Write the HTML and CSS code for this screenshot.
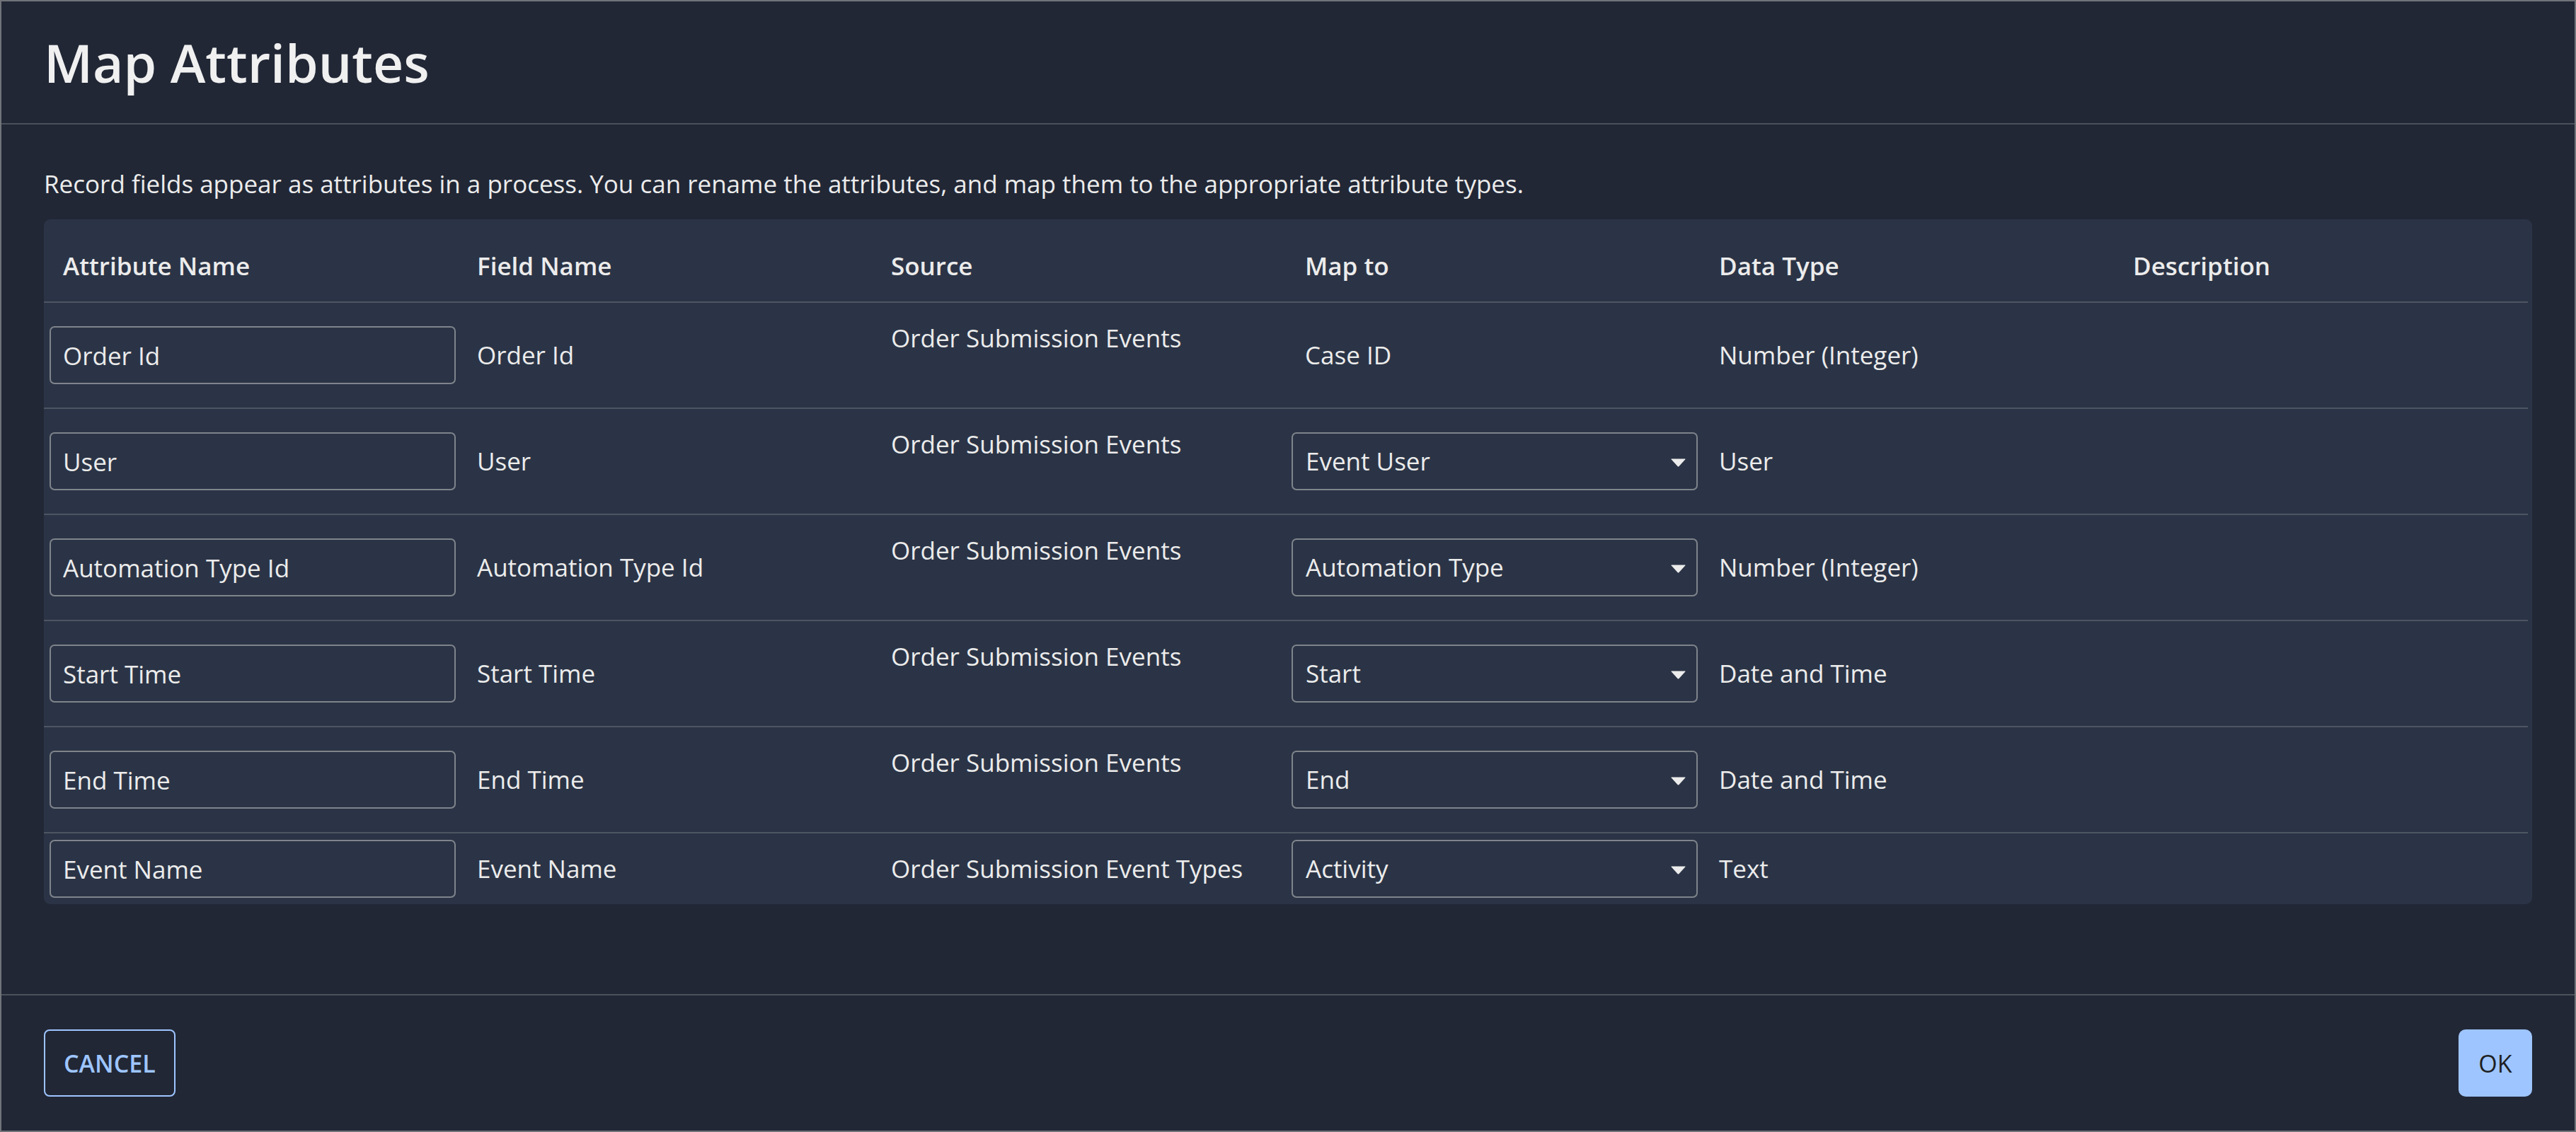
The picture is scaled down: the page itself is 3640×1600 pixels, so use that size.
FILE: index.html
```html
<!DOCTYPE html>
<html lang="en">
<head>
<meta charset="utf-8">
<title>Map Attributes</title>
<link rel="stylesheet" href="styles.css">
</head>
<body>
<div class="dialog">
  <header class="dlg-head">
    <h1 class="title">Map Attributes</h1>
  </header>
  <main class="dlg-body">
    <p class="intro">Record fields appear as attributes in a process. You can rename the attributes, and map them to the appropriate attribute types.</p>
    <div class="card">
      <div class="row head">
        <div class="cell">Attribute Name</div>
        <div class="cell">Field Name</div>
        <div class="cell">Source</div>
        <div class="cell">Map to</div>
        <div class="cell">Data Type</div>
        <div class="cell">Description</div>
      </div>

      <div class="row tall">
        <div class="cell ctrl"><input class="field" type="text" value="Order Id"></div>
        <div class="cell">Order Id</div>
        <div class="cell src"><span class="src-name">Order Submission Events</span><span class="src-extra"></span></div>
        <div class="cell">Case ID</div>
        <div class="cell">Number (Integer)</div>
        <div class="cell"></div>
      </div>

      <div class="row tall">
        <div class="cell ctrl"><input class="field" type="text" value="User"></div>
        <div class="cell">User</div>
        <div class="cell src"><span class="src-name">Order Submission Events</span><span class="src-extra"></span></div>
        <div class="cell ctrl"><div class="select"><span>Event User</span><svg class="caret" viewBox="0 0 21 12" width="21" height="12"><path d="M1 0.5 H20 Q21 0.5 20.2 1.4 L11.3 11.2 Q10.5 12 9.7 11.2 L0.8 1.4 Q0 0.5 1 0.5 Z"/></svg></div></div>
        <div class="cell">User</div>
        <div class="cell"></div>
      </div>

      <div class="row tall">
        <div class="cell ctrl"><input class="field" type="text" value="Automation Type Id"></div>
        <div class="cell">Automation Type Id</div>
        <div class="cell src"><span class="src-name">Order Submission Events</span><span class="src-extra"></span></div>
        <div class="cell ctrl"><div class="select"><span>Automation Type</span><svg class="caret" viewBox="0 0 21 12" width="21" height="12"><path d="M1 0.5 H20 Q21 0.5 20.2 1.4 L11.3 11.2 Q10.5 12 9.7 11.2 L0.8 1.4 Q0 0.5 1 0.5 Z"/></svg></div></div>
        <div class="cell">Number (Integer)</div>
        <div class="cell"></div>
      </div>

      <div class="row tall">
        <div class="cell ctrl"><input class="field" type="text" value="Start Time"></div>
        <div class="cell">Start Time</div>
        <div class="cell src"><span class="src-name">Order Submission Events</span><span class="src-extra"></span></div>
        <div class="cell ctrl"><div class="select"><span>Start</span><svg class="caret" viewBox="0 0 21 12" width="21" height="12"><path d="M1 0.5 H20 Q21 0.5 20.2 1.4 L11.3 11.2 Q10.5 12 9.7 11.2 L0.8 1.4 Q0 0.5 1 0.5 Z"/></svg></div></div>
        <div class="cell">Date and Time</div>
        <div class="cell"></div>
      </div>

      <div class="row tall">
        <div class="cell ctrl"><input class="field" type="text" value="End Time"></div>
        <div class="cell">End Time</div>
        <div class="cell src"><span class="src-name">Order Submission Events</span><span class="src-extra"></span></div>
        <div class="cell ctrl"><div class="select"><span>End</span><svg class="caret" viewBox="0 0 21 12" width="21" height="12"><path d="M1 0.5 H20 Q21 0.5 20.2 1.4 L11.3 11.2 Q10.5 12 9.7 11.2 L0.8 1.4 Q0 0.5 1 0.5 Z"/></svg></div></div>
        <div class="cell">Date and Time</div>
        <div class="cell"></div>
      </div>

      <div class="row last">
        <div class="cell ctrl"><input class="field" type="text" value="Event Name"></div>
        <div class="cell">Event Name</div>
        <div class="cell">Order Submission Event Types</div>
        <div class="cell ctrl"><div class="select"><span>Activity</span><svg class="caret" viewBox="0 0 21 12" width="21" height="12"><path d="M1 0.5 H20 Q21 0.5 20.2 1.4 L11.3 11.2 Q10.5 12 9.7 11.2 L0.8 1.4 Q0 0.5 1 0.5 Z"/></svg></div></div>
        <div class="cell">Text</div>
        <div class="cell"></div>
      </div>
    </div>
  </main>
  <footer class="dlg-foot">
    <button class="btn btn-cancel" type="button">CANCEL</button>
    <button class="btn btn-ok" type="button">OK</button>
  </footer>
</div>
</body>
</html>
```

FILE: styles.css
```css
* {
  box-sizing: border-box;
}

html, body {
  margin: 0;
  padding: 0;
  background: #212735;
}

body {
  font-family: "Open Sans", "Noto Sans", "Liberation Sans", sans-serif;
  color: #ececec;
  font-size: 35px;
  line-height: 48px;
}

.dialog {
  width: 3640px;
  height: 1600px;
  border: 2px solid #707378;
  background: #212735;
  display: flex;
  flex-direction: column;
}

.dlg-head {
  height: 174px;
  flex: none;
  padding: 0 60px;
  border-bottom: 2px solid #4c525b;
  display: flex;
  align-items: center;
}

.title {
  margin: 0;
  font-size: 75px;
  line-height: 92px;
  font-weight: 600;
  color: #f0f0f0;
}

.dlg-body {
  flex: 1;
  padding: 60px 60px 0;
}

.intro {
  margin: 0 0 26px;
  font-size: 35px;
  line-height: 48px;
}

.card {
  background: #2b3446;
  border-radius: 9px;
  padding-right: 6px;
}

.row {
  display: grid;
  grid-template-columns: repeat(6, 1fr);
  align-items: center;
  border-bottom: 2px solid #4e5562;
}

.row.head .cell {
  font-weight: 600;
  padding-top: 42px;
  padding-bottom: 26px;
}

.row.tall {
  height: 150px;
}

.row.last {
  height: 100px;
  border-bottom: none;
}

.cell {
  padding-left: 27px;
  padding-right: 8px;
  white-space: nowrap;
  overflow: hidden;
}

.cell.ctrl {
  padding-left: 8px;
  padding-right: 0;
}

.src {
  display: flex;
  flex-direction: column;
}

.src-extra {
  display: block;
  height: 48px;
}

.field {
  display: block;
  width: 574px;
  height: 82px;
  margin: 0;
  padding: 0 17px;
  border: 2px solid #7f848b;
  border-radius: 7px;
  background: transparent;
  color: #ececec;
  font-family: inherit;
  font-size: 35px;
  outline: none;
}

.select {
  width: 574px;
  height: 82px;
  padding: 0 15px 0 18px;
  border: 2px solid #7f848b;
  border-radius: 7px;
  display: flex;
  align-items: center;
  justify-content: space-between;
  color: #ececec;
}

.caret {
  display: block;
  fill: #ececec;
  margin-top: 3px;
}

.dlg-foot {
  flex: none;
  height: 193px;
  border-top: 2px solid #4c525b;
  padding: 0 60px;
  display: flex;
  align-items: center;
  justify-content: space-between;
}

.btn {
  height: 95px;
  font-family: inherit;
  font-size: 34px;
  line-height: 48px;
  margin: 0;
  cursor: pointer;
}

.btn-cancel {
  padding: 0 26px;
  border: 2px solid #9ec5ff;
  border-radius: 8px;
  background: transparent;
  color: #9ec5ff;
  font-weight: 600;
}

.btn-ok {
  width: 104px;
  padding: 0;
  border: none;
  border-radius: 10px;
  background: #9ec5ff;
  color: #1e1f22;
  font-weight: 500;
}
```
